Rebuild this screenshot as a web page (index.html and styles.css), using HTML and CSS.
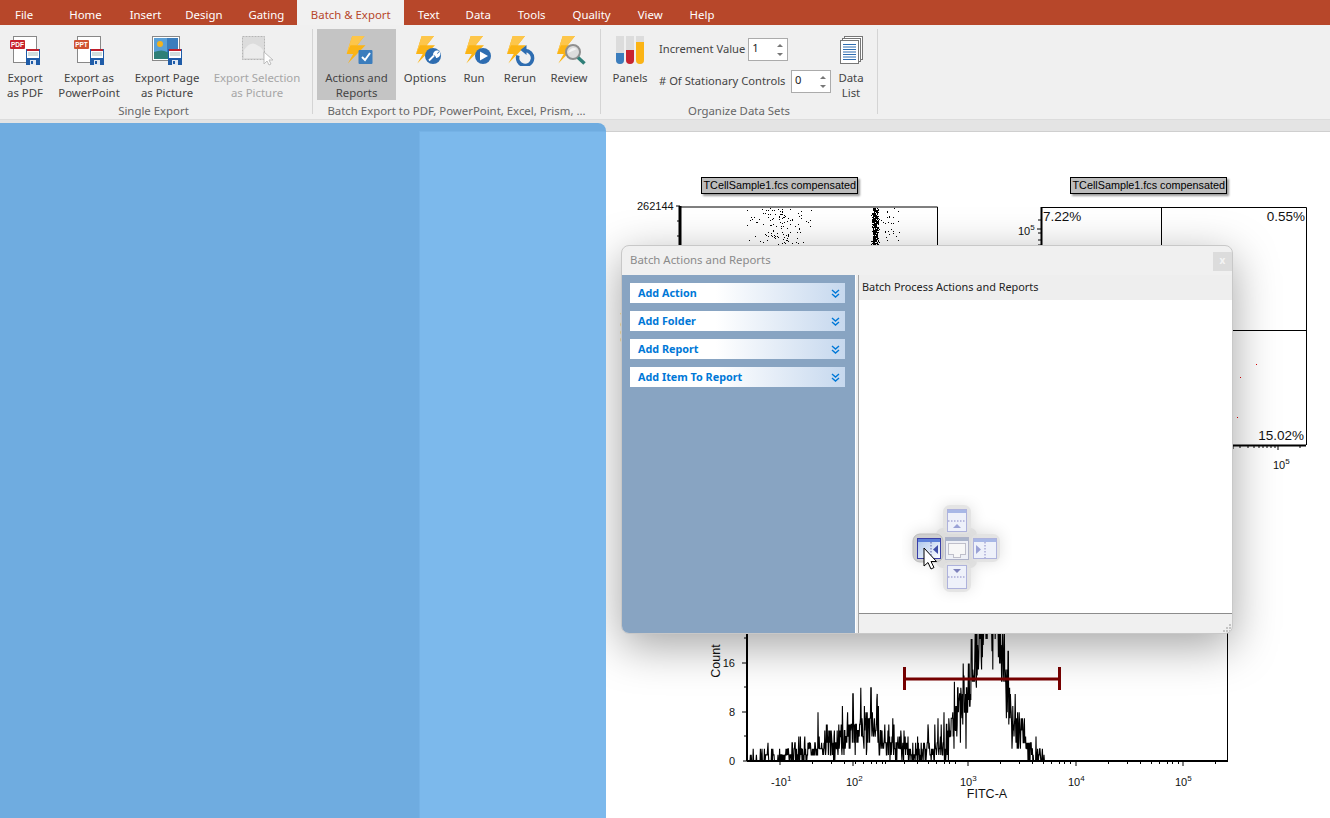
FILE: index.html
```html
<!DOCTYPE html>
<html lang="en">
<head>
<meta charset="utf-8">
<title>Batch &amp; Export</title>
<link rel="stylesheet" href="styles.css">
</head>
<body>
<svg class="defs" width="0" height="0" aria-hidden="true">
  <defs>
    <symbol id="bolt" viewBox="0 0 20 28"><path d="M5.700 0H18L10.700 9.300H19L1.300 27.500 6.700 18H0z" fill="#fbb415"/><path d="M5.700 0H18L10.700 9.300H4L0 18z" fill="#fdc64a"/></symbol>
    <symbol id="disk" viewBox="0 0 14 16"><rect x="0" y="0" width="14" height="16" fill="#1f5ca8"/><rect x="1" y="1" width="12" height="8" fill="#fff"/><rect x="1" y="0" width="12" height="2" fill="#c0202c"/><path d="M2 4h10M2 6h10" stroke="#8aa" stroke-width=".8"/><rect x="4" y="11" width="6" height="5" fill="#dfe7f2"/><rect x="5" y="12" width="2" height="3" fill="#1f5ca8"/></symbol>
  </defs>
</svg>

<nav class="tabs">
  <span class="tab tab-file">File</span>
  <span class="tab tab-home">Home</span>
  <span class="tab tab-insert">Insert</span>
  <span class="tab tab-design">Design</span>
  <span class="tab tab-last">Gating</span>
  <span class="tab tab-active">Batch &amp; Export</span>
  <span class="tab tab-text">Text</span>
  <span class="tab">Data</span>
  <span class="tab">Tools</span>
  <span class="tab">Quality</span>
  <span class="tab">View</span>
  <span class="tab">Help</span>
</nav>

<section class="ribbon">
  <div class="group group-single">
    <div class="group-body">
      <button class="rb rb-pdf">
        <svg class="rb-icon" width="34" height="32" viewBox="0 0 34 32"><rect x="5.500" y="2.500" width="23" height="26" fill="#fff" stroke="#888"/><rect x="2" y="6" width="15" height="9" rx="1" fill="#c8242f"/><text x="9.500" y="13.200" class="ico-txt">PDF</text><use href="#disk" x="18" y="15" width="14" height="16"/></svg>
        <span>Export<br>as PDF</span>
      </button>
      <button class="rb rb-ppt">
        <svg class="rb-icon" width="34" height="32" viewBox="0 0 34 32"><rect x="5.500" y="2.500" width="23" height="26" fill="#fff" stroke="#888"/><rect x="2" y="6" width="15" height="9" rx="1" fill="#cf5330"/><text x="9.500" y="13.200" class="ico-txt">PPT</text><use href="#disk" x="18" y="15" width="14" height="16"/></svg>
        <span>Export as<br>PowerPoint</span>
      </button>
      <button class="rb rb-page">
        <svg class="rb-icon" width="34" height="32" viewBox="0 0 34 32"><rect x="2.500" y="2.500" width="27" height="24" fill="#fff" stroke="#888"/><rect x="4" y="4" width="24" height="21" fill="#3b7dbd"/><rect x="4" y="4" width="13" height="14" fill="#5aa0d8"/><circle cx="10" cy="10" r="3" fill="#f3b21e"/><path d="M4 18q8-3 13 0t11 0v7H4z" fill="#2f7f78"/><use href="#disk" x="18" y="15" width="14" height="16"/></svg>
        <span>Export Page<br>as Picture</span>
      </button>
      <button class="rb rb-sel rb-disabled">
        <svg class="rb-icon" width="34" height="32" viewBox="0 0 34 32"><rect x="2.500" y="2.500" width="22" height="23" fill="#dcdcdc" stroke="#b5b5b5" stroke-dasharray="2 1"/><path d="M4 16q6-8 11-6t8 6v8H4z" fill="#ececec"/><path d="M24 18l0 12 3-3 2 4 2-1-2-4h4z" fill="#fff" stroke="#bdbdbd"/></svg>
        <span>Export Selection<br>as Picture</span>
      </button>
    </div>
    <div class="group-name name-single">Single Export</div>
  </div>

  <div class="group group-batch">
    <div class="group-body">
      <button class="rb rb-actions">
        <svg class="rb-icon" width="34" height="32" viewBox="0 0 34 32"><use href="#bolt" x="6.500" y="2" width="20" height="28"/><rect x="18.500" y="16" width="14" height="14" rx="1" fill="#3b7dbd"/><path d="M22 23l3 3 5-7" fill="none" stroke="#fff" stroke-width="2"/></svg>
        <span>Actions and<br>Reports</span>
      </button>
      <button class="rb rb-options">
        <svg class="rb-icon" width="34" height="32" viewBox="0 0 34 32"><use href="#bolt" x="8" y="2" width="20" height="28"/><circle cx="25" cy="22" r="8" fill="#2e6db1"/><path d="M21 26.500l5-5M26 21a3 3 0 0 1 3.500-3.500l-1.800 2 1.600 1.600 2-1.800A3 3 0 0 1 28 23" fill="#fff" stroke="#fff" stroke-width="1.800"/></svg>
        <span>Options</span>
      </button>
      <button class="rb rb-run">
        <svg class="rb-icon" width="34" height="32" viewBox="0 0 34 32"><use href="#bolt" x="8" y="2" width="20" height="28"/><circle cx="26" cy="22" r="8" fill="#2e6db1"/><path d="M23 17.500l8 4.500-8 4.500z" fill="#fff"/></svg>
        <span>Run</span>
      </button>
      <button class="rb rb-rerun">
        <svg class="rb-icon" width="34" height="32" viewBox="0 0 34 32"><use href="#bolt" x="4" y="2" width="20" height="28"/><path d="M22 16.500a7.500 7.500 0 1 1-7 5" fill="none" stroke="#2e6db1" stroke-width="3.500"/><path d="M23.500 11v10l-6-5z" fill="#2e6db1"/></svg>
        <span>Rerun</span>
      </button>
      <button class="rb rb-review">
        <svg class="rb-icon" width="34" height="32" viewBox="0 0 34 32"><use href="#bolt" x="5" y="2" width="20" height="28"/><circle cx="21" cy="18" r="7" fill="#dcdcdc" stroke="#8f8f8f" stroke-width="2"/><path d="M16 19q3-7 9-4" fill="#f4f4f4"/><path d="M26 23.500l6.500 6" stroke="#2f7f78" stroke-width="3.500"/></svg>
        <span>Review</span>
      </button>
    </div>
    <div class="group-name name-batch">Batch Export to PDF, PowerPoint, Excel, Prism, ...</div>
  </div>

  <div class="group group-organize">
    <div class="group-body">
      <button class="rb rb-panels">
        <svg class="rb-icon" width="32" height="32" viewBox="0 0 32 32"><path d="M2 2h8v24a4 4 0 0 1-8 0z" fill="#dcdcdc"/><path d="M2 19h8v7a4 4 0 0 1-8 0z" fill="#3b7dbd"/><path d="M12 2h8v24a4 4 0 0 1-8 0z" fill="#dcdcdc"/><path d="M12 16h8v10a4 4 0 0 1-8 0z" fill="#c8242f"/><path d="M22 2h8v24a4 4 0 0 1-8 0z" fill="#dcdcdc"/><path d="M22 8h8v18a4 4 0 0 1-8 0z" fill="#fbb415"/></svg>
        <span>Panels</span>
      </button>
      <div class="fields">
        <div class="field">
          <label>Increment Value</label>
          <div class="spin"><span>1</span><i class="arrows"><b class="up"></b><b class="down"></b></i></div>
        </div>
        <div class="field">
          <label># Of Stationary Controls</label>
          <div class="spin"><span>0</span><i class="arrows"><b class="up"></b><b class="down"></b></i></div>
        </div>
      </div>
      <button class="rb rb-list">
        <svg class="rb-icon" width="28" height="32" viewBox="0 0 28 32"><rect x="7.500" y="2.500" width="18" height="23" fill="#fff" stroke="#777"/><rect x="5.500" y="4.500" width="18" height="23" fill="#fff" stroke="#777"/><rect x="3.500" y="6.500" width="18" height="23" fill="#fff" stroke="#777"/><path d="M6 10.500h13M6 13h13M6 15.500h13M6 18h13M6 20.500h13M6 23h13M6 25.500h13" stroke="#2e6db1"/></svg>
        <span>Data<br>List</span>
      </button>
    </div>
    <div class="group-name">Organize Data Sets</div>
  </div>
</section>

<main class="workspace">
  <div class="doc-overlay">
    <div class="pane-dark"></div>
    <div class="pane-light"></div>
  </div>

  <div class="page">
    <svg class="plots" width="724" height="687" viewBox="606 131 724 687">
      <!-- scatter plot -->
      <g id="scatter"></g>
      <path d="M680 207H937.500V460M680 206V460" fill="none" stroke="#000" stroke-width="1"/>
      <path d="M680 206V460" stroke="#000" stroke-width="3"/>
      <path d="M676 206h4M677 221h3M677 236h3" stroke="#000"/>
      <text x="637" y="210" class="plot-txt">262144</text>
      <text class="plot-txt" transform="translate(629,343.500) rotate(-90)">SSC-A</text>

      <!-- quadrant plot -->
      <path d="M1041.500 207.500H1306.500V445M1161.500 207V330M1041 330.500H1306" fill="none" stroke="#000"/>
      <path d="M1041.500 207V445M1041 445.500H1306" stroke="#000" stroke-width="2"/>
      <path d="M1037 229h4M1038 233h3M1038 220h3M1038 240h3M1038 245h3" stroke="#000"/>
      <path d="M1233 445v4M1240 445v3M1248 445v3M1254 445v3M1259 445v3M1263 445v3M1267 445v3M1271 445v3M1275 445v3M1278 445v5M1300 445v3" stroke="#000"/>
      <text x="1043" y="221" class="plot-pct">7.22%</text>
      <text x="1305" y="221" class="plot-pct plot-end">0.55%</text>
      <text x="1304" y="440" class="plot-pct plot-end">15.02%</text>
      <rect x="1256" y="364" width="1" height="1" fill="#e00000"/>
      <rect x="1240" y="377" width="1" height="1" fill="#e00000"/>
      <rect x="1237" y="417" width="1" height="1" fill="#e00000"/>
      <text x="1018" y="235" class="plot-txt">10<tspan class="sup" dy="-5">5</tspan></text>
      <text x="1273" y="469" class="plot-txt">10<tspan class="sup" dy="-5">5</tspan></text>

      <!-- histogram -->
      <path id="hist" fill="none" stroke="#000" stroke-width="1.100" d=""/>
      <path d="M747.500 600V761.500H1227.500V600" fill="none" stroke="#000"/>
      <path d="M747 600V761M747 761H1228" stroke="#000" stroke-width="2"/>
      <path id="hist-ticks" stroke="#000" d="M743 761h4M742 712h5M742 663h5M744 736h3M744 687h3M744 638h3M853 761v5M968 761v5M1076 761v5M1183 761v5M780 761v4"/>
      <path d="M904 679H1059" stroke="#780000" stroke-width="3"/>
      <path d="M904.500 667V690M1059.500 667V690" stroke="#780000" stroke-width="3"/>
      <text x="735" y="765" class="plot-txt plot-end">0</text>
      <text x="735" y="716" class="plot-txt plot-end">8</text>
      <text x="735" y="667" class="plot-txt plot-end">16</text>
      <text class="axis-title plot-mid" transform="translate(720,661) rotate(-90)">Count</text>
      <text x="771" y="786" class="plot-txt">-10<tspan class="sup" dy="-5">1</tspan></text>
      <text x="846" y="786" class="plot-txt">10<tspan class="sup" dy="-5">2</tspan></text>
      <text x="960" y="786" class="plot-txt">10<tspan class="sup" dy="-5">3</tspan></text>
      <text x="1068" y="786" class="plot-txt">10<tspan class="sup" dy="-5">4</tspan></text>
      <text x="1175" y="786" class="plot-txt">10<tspan class="sup" dy="-5">5</tspan></text>
      <text x="987" y="798" class="axis-title plot-mid">FITC-A</text>
    </svg>
    <div class="plot-title title-a">TCellSample1.fcs compensated</div>
    <div class="plot-title title-b">TCellSample1.fcs compensated</div>
  </div>

  <div class="dialog">
    <div class="dlg-head">
      <span class="dlg-title">Batch Actions and Reports</span>
      <span class="dlg-close">x</span>
    </div>
    <div class="dlg-body">
      <aside class="tasks">
        <div class="task"><span>Add Action</span><svg width="9" height="9" viewBox="0 0 9 9"><path d="M1 1l3.500 3 3.500-3M1 5l3.500 3 3.500-3" fill="none" stroke="#0078d7" stroke-width="1.400"/></svg></div>
        <div class="task"><span>Add Folder</span><svg width="9" height="9" viewBox="0 0 9 9"><path d="M1 1l3.500 3 3.500-3M1 5l3.500 3 3.500-3" fill="none" stroke="#0078d7" stroke-width="1.400"/></svg></div>
        <div class="task"><span>Add Report</span><svg width="9" height="9" viewBox="0 0 9 9"><path d="M1 1l3.500 3 3.500-3M1 5l3.500 3 3.500-3" fill="none" stroke="#0078d7" stroke-width="1.400"/></svg></div>
        <div class="task"><span>Add Item To Report</span><svg width="9" height="9" viewBox="0 0 9 9"><path d="M1 1l3.500 3 3.500-3M1 5l3.500 3 3.500-3" fill="none" stroke="#0078d7" stroke-width="1.400"/></svg></div>
      </aside>
      <div class="splitter"></div>
      <div class="dlg-main">
        <div class="dlg-main-head">Batch Process Actions and Reports</div>
        <div class="dlg-list"></div>
        <div class="dlg-foot">
          <svg class="grip" width="8" height="8" viewBox="0 0 8 8"><path d="M6 0h2v2H6zM3 3h2v2H3zM6 3h2v2H6zM0 6h2v2H0zM3 6h2v2H3zM6 6h2v2H6z" fill="#c4c4c4"/></svg>
        </div>
      </div>
    </div>
  </div>

  <svg class="dock" width="110" height="110" viewBox="0 0 110 110">
    <defs>
      <filter id="soft" x="-50%" y="-50%" width="200%" height="200%"><feGaussianBlur stdDeviation="8"/></filter>
      <linearGradient id="hot" x1="0" y1="0" x2="1" y2="1"><stop offset="0" stop-color="#a9c4ea"/><stop offset="1" stop-color="#fff"/></linearGradient>
    </defs>
    <path d="M41 12h28v26h28v28H69v28H41V66H12V38h29z" fill="#000" opacity=".14" filter="url(#soft)"/>
    <rect x="34" y="33" width="41" height="40" rx="7" fill="#dcdcdc" fill-opacity=".8"/>
    <rect x="41" y="10" width="28" height="29" rx="7" fill="#e2e2e2" fill-opacity=".85"/>
    <rect x="41" y="67" width="28" height="30" rx="7" fill="#e2e2e2" fill-opacity=".85"/>
    <rect x="11" y="39" width="30" height="28" rx="7" fill="#cfcfcf" stroke="#bdbdbd"/>
    <rect x="69" y="39" width="29" height="28" rx="7" fill="#e2e2e2" fill-opacity=".85"/>
    <!-- top -->
    <rect x="45.500" y="14.500" width="19" height="22" fill="#eef1fa" stroke="#aeb2dc"/><rect x="46" y="15" width="18" height="3" fill="#a8b8e6"/>
    <path d="M46 26h18" stroke="#8888c4" stroke-dasharray="1.500 1.500"/><path d="M55 29l4 4h-8z" fill="#9aa2d6"/>
    <!-- bottom -->
    <rect x="45.500" y="70.500" width="19" height="23" fill="#eef1fa" stroke="#aeb2dc"/>
    <path d="M46 82h18" stroke="#8888c4" stroke-dasharray="1.500 1.500"/><path d="M51 74h8l-4 4z" fill="#7e82bc"/>
    <!-- left, highlighted -->
    <rect x="15.500" y="43.500" width="23" height="20" fill="url(#hot)" stroke="#3a3fa8"/><rect x="16" y="44" width="22" height="3" fill="#5c80d8"/>
    <path d="M29 47v16" stroke="#5a5ea8" stroke-dasharray="1.500 1.500"/><path d="M36 50v9l-5-4.500z" fill="#3f4fa8"/>
    <!-- right -->
    <rect x="71.500" y="43.500" width="23" height="20" fill="#eef1fa" stroke="#aeb2dc"/><rect x="72" y="44" width="22" height="3" fill="#a8b8e6"/>
    <path d="M83 47v16" stroke="#8888c4" stroke-dasharray="1.500 1.500"/><path d="M74 50v9l5-4.500z" fill="#9aa2d6"/>
    <!-- centre -->
    <rect x="43.500" y="42.500" width="23" height="22" fill="#eef0f6" stroke="#aeb2c8"/><rect x="44" y="43" width="22" height="3" fill="#a9b3c9"/>
    <path d="M46.500 48.500h17v11h-5v3h-7v-3h-5z" fill="#f7f7f7" stroke="#8a8a9c" stroke-dasharray="1 1"/>
    <!-- mouse pointer -->
    <path d="M22 53v18l4-3.500 3 6.500 3-1.500-3-6h5.500z" fill="#fff" stroke="#000"/>
  </svg>
</main>
<script src="plot.js"></script>
</body>
</html>
```
FILE: styles.css
```css
* { box-sizing: border-box; }
html, body { margin: 0; height: 100%; overflow: hidden; }
body {
  width: 1330px;
  height: 818px;
  display: flex;
  flex-direction: column;
  font-family: "Noto Sans", "Open Sans", sans-serif;
  font-size: 11.4px;
  color: #444;
  background: #fff;
}
.defs { position: absolute; }

.tabs {
  height: 25px;
  flex: none;
  display: flex;
  align-items: stretch;
  background: #b7472a;
  color: #fff;
  padding-left: 1.500px;
}
.tab { padding: 0 13.5px; line-height: 29px; height: 25px; overflow: hidden; }
.tab-file { margin-right: 9px; }
.tab-home { margin-right: 1px; }
.tab-insert { margin-right: -3px; }
.tab-design { margin-right: -1px; }
.tab-last { padding-right: 13px; }
.tab-text { margin-right: -1px; }
.tab-active { background: #f1f1f1; color: #b7472a; width: 107px; padding: 0; text-align: center; }

.ribbon {
  height: 95px;
  flex: none;
  display: flex;
  background: #f0f0f0;
  border-bottom: 1px solid #dcdcdc;
}
.group { display: flex; flex-direction: column; border-right: 1px solid #d4d4d4; margin: 4px 0 5px; }
.group-single { width: 313px; }
.group-batch { width: 288px; padding-left: 4px; }
.group-organize { width: 277px; }
.group-body { display: flex; height: 72px; position: relative; }
.group-name { text-align: center; line-height: 14px; margin-top: 4px; color: #666; white-space: nowrap; }
.name-single { padding-right: 5px; }
.name-batch { padding-right: 4px; }

.rb {
  border: 0;
  padding: 0;
  background: none;
  font: inherit;
  color: #444;
  line-height: 15px;
  display: flex;
  flex-direction: column;
  align-items: center;
  white-space: nowrap;
  flex: none;
}
.rb-icon { display: block; height: 32px; margin: 5px 0 4px; flex: none; }
.rb span { display: block; }
.rb-pdf { width: 50px; }
.rb-ppt { width: 78px; }
.rb-page { width: 78px; }
.rb-sel { width: 102px; }
.rb-disabled { color: #a6a6a6; }
.rb-actions { width: 79px; background: #c4c4c4; margin-right: 4px; }
.rb-options { width: 50px; }
.rb-run { width: 48px; }
.rb-rerun { width: 44px; }
.rb-review { width: 54px; }
.rb-panels { width: 58px; }
.rb-list { width: 40px; }
.ico-txt { font: bold 6.500px "Liberation Sans", sans-serif; fill: #fff; text-anchor: middle; }

.fields { display: flex; flex-direction: column; gap: 9px; padding-top: 9px; width: 172px; flex: none; }
.field { display: flex; align-items: center; justify-content: space-between; height: 23px; white-space: nowrap; font-size: 11.2px; }
.field label { padding-bottom: 2px; }
.field:first-child { justify-content: flex-start; gap: 3px; }
.spin {
  width: 40px;
  height: 23px;
  background: #fff;
  border: 1px solid #ababab;
  display: flex;
  justify-content: space-between;
  padding: 0 4px 0 3px;
  color: #222;
  line-height: 17px;
}
.arrows { display: flex; flex-direction: column; justify-content: center; gap: 6px; font-style: normal; }
.arrows b { display: block; width: 0; height: 0; border-left: 3px solid transparent; border-right: 3px solid transparent; }
.arrows .up { border-bottom: 3px solid #777; }
.arrows .down { border-top: 3px solid #777; }

.workspace {
  flex: 1;
  position: relative;
  background: #e4e4e4;
  min-height: 0;
}
.doc-overlay {
  position: absolute;
  left: 0;
  top: 3px;
  width: 606px;
  bottom: 0;
  display: flex;
  border-top-right-radius: 8px;
  overflow: hidden;
  background: #6face0;
  z-index: 5;
}
.pane-dark { width: 419px; }
.pane-light { flex: 1; background: #7cb9ec; margin-top: 8px; border-left: 1px solid #75b2e6; border-top: 1px solid #75b2e6; }

.page {
  position: absolute;
  left: 606px;
  top: 11px;
  right: 0;
  bottom: 0;
  background: #fff;
  border-top: 1px solid #cfcfcf;
}
.plots { display: block; margin-top: -1px; }
.plot-txt { font: 11px "Liberation Sans", sans-serif; fill: #111; }
.axis-title { font: 12.5px "Liberation Sans", sans-serif; fill: #111; }
.plot-end { text-anchor: end; }
.plot-mid { text-anchor: middle; }
.plot-pct { font: 13.5px "Liberation Sans", sans-serif; fill: #111; }
.sup { font-size: 8px; }
.plot-title {
  position: absolute;
  height: 17px;
  padding: 0 1.500px;
  background: #bdbdbd;
  border: 1px solid #000;
  box-shadow: 2px 2px 2px rgba(0,0,0,.4);
  font: 10.8px/15px "Liberation Sans", sans-serif;
  color: #000;
  white-space: nowrap;
}
.title-a { left: 95px; top: 45px; }
.title-b { left: 464px; top: 45px; }

.dialog {
  position: absolute;
  left: 621px;
  top: 125px;
  width: 612px;
  height: 389px;
  background: #f0f0f0;
  border: 1px solid #c8c8c8;
  border-radius: 8px;
  overflow: hidden;
  box-shadow: 0 12px 45px rgba(0,0,0,.36);
  display: flex;
  flex-direction: column;
  z-index: 3;
}
.dlg-head { height: 29px; flex: none; display: flex; justify-content: space-between; align-items: flex-start; }
.dlg-title { color: #8a8a8a; padding: 6px 0 0 8px; line-height: 16px; }
.dlg-close {
  width: 19px;
  height: 19px;
  margin: 6px 0 0 0;
  background: #dcdcdc;
  color: #f4f4f4;
  text-align: center;
  line-height: 17px;
  font-size: 10px;
  font-weight: bold;
}
.dlg-body { flex: 1; display: flex; min-height: 0; }
.tasks {
  width: 233px;
  flex: none;
  background: #88a4c2;
  padding: 8px 10px 0 8px;
  display: flex;
  flex-direction: column;
  gap: 8px;
}
.task {
  height: 20px;
  flex: none;
  display: flex;
  align-items: center;
  justify-content: space-between;
  padding: 0 5px 2px 8px;
  background: linear-gradient(90deg, #fff 0%, #fff 40%, #c6d8ee 100%);
  color: #0078d7;
  font: bold 10.8px "Noto Sans", sans-serif;
}
.task svg { margin-top: 2px; }
.splitter { width: 4px; flex: none; background: #f0f0f0; border-left: 1px solid #fff; border-right: 1px solid #a8a8a8; }
.dlg-main { flex: 1; display: flex; flex-direction: column; min-width: 0; }
.dlg-main-head { height: 25px; flex: none; background: #eeeeee; color: #222; font-size: 10.9px; line-height: 24px; padding-left: 3px; }
.dlg-list { flex: 1; background: #fff; border-bottom: 1px solid #8c8c8c; }
.dlg-foot { height: 19px; flex: none; display: flex; justify-content: flex-end; align-items: flex-end; padding: 0 1px 1px 0; }

.dock { position: absolute; left: 902px; top: 375px; z-index: 4; }
```
FILE: plot.js
```js
// Deterministic drawing of the sample data in the two visible plots.
var seed = 12345;
function rnd() { seed = (seed * 16807) % 2147483647; return seed / 2147483647; }
var NS = "http://www.w3.org/2000/svg";

// Scatter dots
var scatter = document.getElementById("scatter");
function dots(n, x0, x1, y0, y1) {
  for (var i = 0; i < n; i++) {
    var r = document.createElementNS(NS, "rect");
    var u = (rnd() + rnd()) / 2;
    r.setAttribute("x", Math.round(x0 + u * (x1 - x0)));
    r.setAttribute("y", Math.round(y0 + rnd() * (y1 - y0)));
    r.setAttribute("width", 1);
    r.setAttribute("height", 1);
    scatter.appendChild(r);
  }
}
dots(130, 745, 815, 208, 246);
dots(30, 880, 902, 208, 246);
dots(420, 871, 879, 208, 246);

// Histogram envelope: [x, mean count]
var env = [[750,.25],[775,.5],[790,1],[810,2],[835,3],[853,5],[871,5.5],[885,3.5],[895,2],[915,1.2],[935,2],[948,4],[958,7],[968,12],[978,19],[990,26],[1000,22],[1006,13],[1012,8],[1020,5],[1028,2.5],[1036,1],[1044,.3],[1048,.1]];
function level(x) {
  for (var i = 1; i < env.length; i++) {
    if (x <= env[i][0]) {
      var a = env[i - 1], b = env[i];
      return a[1] + (b[1] - a[1]) * (x - a[0]) / (b[0] - a[0]);
    }
  }
  return 0;
}
function poisson(m) {
  var lim = Math.exp(-m), k = 0, p = 1;
  do { k++; p *= rnd(); } while (p > lim);
  return k - 1;
}
var d = "M750 761";
for (var x = 750; x <= 1048; x += 0.4) {
  var v = poisson(level(x));
  if (Math.abs(x - 853) < 0.3) v = 11;
  if (Math.abs(x - 871) < 0.3) v = 12;
  d += "L" + x.toFixed(1) + " " + (761 - v * 6.1).toFixed(1);
}
document.getElementById("hist").setAttribute("d", d + "L1049 761");

// Minor ticks on the histogram axis
var t = "";
[780, 853, 968, 1076, 1183].forEach(function (m) {
  [0.3, 0.48, 0.6, 0.7, 0.78, 0.85, 0.9, 0.95].forEach(function (f) {
    var px = Math.round(m + f * 107) + 0.5;
    if (px < 1227) t += "M" + px + " 761v3";
  });
});
var ticks = document.getElementById("hist-ticks");
ticks.setAttribute("d", ticks.getAttribute("d") + t);
```
